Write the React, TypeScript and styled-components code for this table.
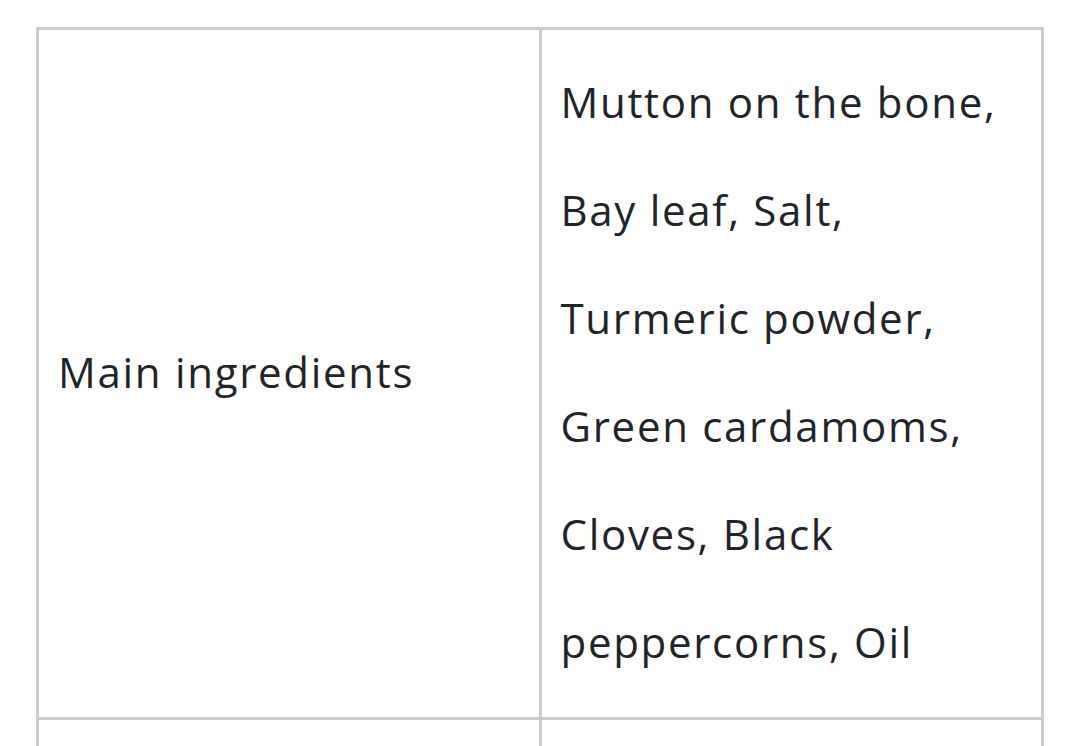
import React from "react";
import styled, { createGlobalStyle } from "styled-components";

const GlobalStyle = createGlobalStyle`
  html, body {
    margin: 0;
    padding: 0;
    background: #ffffff;
  }
  body {
    font-family: "Open Sans", "Noto Sans", sans-serif;
    color: #212529;
  }
`;

const Page = styled.div`
  padding: 27px 36px 0 36px;
`;

const Table = styled.table`
  width: 1008px;
  border-collapse: collapse;
  table-layout: fixed;
  border: 3px solid #cccccc;
`;

const Cell = styled.td<{ $empty?: boolean }>`
  border: 3px solid #cccccc;
  padding: 18px 21px 21px 19px;
  font-size: 42px;
  letter-spacing: 1.7px;
  line-height: 108px;
  vertical-align: middle;
  color: #212529;
  height: ${(p) => (p.$empty ? "150px" : "auto")};
`;

export default function App() {
  return (
    <>
      <GlobalStyle />
      <Page>
        <Table>
          <tbody>
            <tr>
              <Cell>Main ingredients</Cell>
              <Cell>
                Mutton on the bone, Bay leaf, Salt, Turmeric powder, Green
                cardamoms, Cloves, Black peppercorns, Oil
              </Cell>
            </tr>
            <tr>
              <Cell $empty />
              <Cell $empty />
            </tr>
          </tbody>
        </Table>
      </Page>
    </>
  );
}
